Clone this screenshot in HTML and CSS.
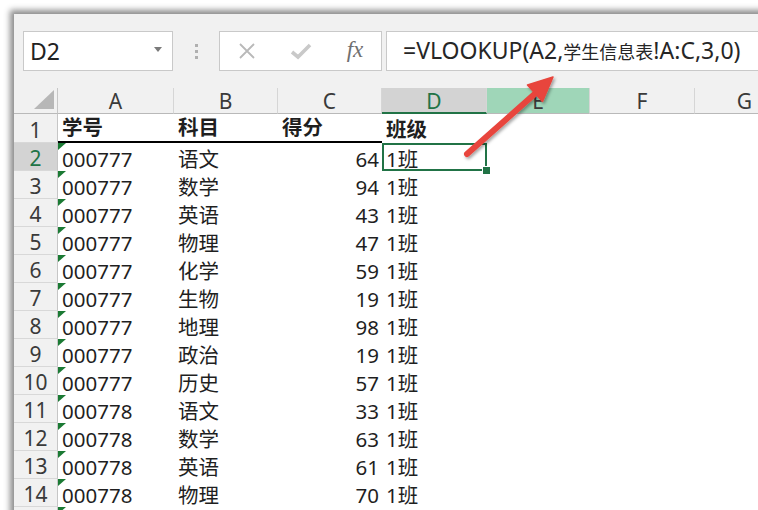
FILE: index.html
```html
<!DOCTYPE html>
<html lang="zh-CN">
<head>
<meta charset="UTF-8" />
<title>VLOOKUP 示例</title>
<link rel="stylesheet" href="styles.css">
</head>
<body>
<div class="win">
  <div class="fbar">
    <div class="namebox"><span>D2</span><i class="caret"></i></div>
    <div class="sep"><i></i><i></i><i></i></div>
    <div class="btns">
      <svg width="18" height="18" viewBox="0 0 18 18"><path d="M2 2L16 16M16 2L2 16" stroke="#b9b9b9" stroke-width="1.8" fill="none"/></svg>
      <svg width="22" height="18" viewBox="0 0 22 18"><path d="M2 10L8 15L20 3" stroke="#c9c9c9" stroke-width="3.6" fill="none"/></svg>
      <span class="b-fx">fx</span>
    </div>
    <div class="formula">=VLOOKUP(A2,<span class="cjk">学生信息表</span>!A:C,3,0)</div>
  </div>

  <div class="grid">
    <div class="corner"><i></i></div>
    <div class="ch">A</div><div class="ch">B</div><div class="ch">C</div>
    <div class="ch sel">D</div><div class="ch hi">E</div><div class="ch">F</div><div class="ch">G</div>

    <div class="rh">1</div>
    <div class="c hd line">学号</div><div class="c hd line">科目</div><div class="c hd line">得分</div>
    <div class="c hd">班级</div><div class="c"></div><div class="c"></div><div class="c"></div>

    <div class="rh sel">2</div>
    <div class="c txt">000777</div><div class="c">语文</div><div class="c num">64</div>
    <div class="c active">1班</div><div class="c"></div><div class="c"></div><div class="c"></div>

    <div class="rh">3</div>
    <div class="c txt">000777</div><div class="c">数学</div><div class="c num">94</div>
    <div class="c">1班</div><div class="c"></div><div class="c"></div><div class="c"></div>

    <div class="rh">4</div>
    <div class="c txt">000777</div><div class="c">英语</div><div class="c num">43</div>
    <div class="c">1班</div><div class="c"></div><div class="c"></div><div class="c"></div>

    <div class="rh">5</div>
    <div class="c txt">000777</div><div class="c">物理</div><div class="c num">47</div>
    <div class="c">1班</div><div class="c"></div><div class="c"></div><div class="c"></div>

    <div class="rh">6</div>
    <div class="c txt">000777</div><div class="c">化学</div><div class="c num">59</div>
    <div class="c">1班</div><div class="c"></div><div class="c"></div><div class="c"></div>

    <div class="rh">7</div>
    <div class="c txt">000777</div><div class="c">生物</div><div class="c num">19</div>
    <div class="c">1班</div><div class="c"></div><div class="c"></div><div class="c"></div>

    <div class="rh">8</div>
    <div class="c txt">000777</div><div class="c">地理</div><div class="c num">98</div>
    <div class="c">1班</div><div class="c"></div><div class="c"></div><div class="c"></div>

    <div class="rh">9</div>
    <div class="c txt">000777</div><div class="c">政治</div><div class="c num">19</div>
    <div class="c">1班</div><div class="c"></div><div class="c"></div><div class="c"></div>

    <div class="rh">10</div>
    <div class="c txt">000777</div><div class="c">历史</div><div class="c num">57</div>
    <div class="c">1班</div><div class="c"></div><div class="c"></div><div class="c"></div>

    <div class="rh">11</div>
    <div class="c txt">000778</div><div class="c">语文</div><div class="c num">33</div>
    <div class="c">1班</div><div class="c"></div><div class="c"></div><div class="c"></div>

    <div class="rh">12</div>
    <div class="c txt">000778</div><div class="c">数学</div><div class="c num">63</div>
    <div class="c">1班</div><div class="c"></div><div class="c"></div><div class="c"></div>

    <div class="rh">13</div>
    <div class="c txt">000778</div><div class="c">英语</div><div class="c num">61</div>
    <div class="c">1班</div><div class="c"></div><div class="c"></div><div class="c"></div>

    <div class="rh">14</div>
    <div class="c txt">000778</div><div class="c">物理</div><div class="c num">70</div>
    <div class="c">1班</div><div class="c"></div><div class="c"></div><div class="c"></div>

    <div class="rh"></div>
    <div class="c txt"></div><div class="c"></div><div class="c"></div>
    <div class="c"></div><div class="c"></div><div class="c"></div><div class="c"></div>
  </div>
</div>

<svg class="arrow" width="758" height="510" viewBox="0 0 758 510">
  <defs>
    <filter id="sh" x="-20%" y="-20%" width="140%" height="140%">
      <feDropShadow dx="1.5" dy="2" stdDeviation="1.5" flood-color="#000" flood-opacity="0.35"/>
    </filter>
  </defs>
  <g filter="url(#sh)" fill="#e8453c" stroke="#e8453c">
    <line x1="467" y1="154" x2="538" y2="91" stroke-width="6" stroke-linecap="round"/>
    <polygon points="553,77 527.5,85 542.5,101.5" stroke-width="1.5" stroke-linejoin="round"/>
  </g>
</svg>
</body>
</html>
```

FILE: styles.css
```css
* { box-sizing: border-box; margin: 0; padding: 0; }
body { background: #fff; overflow: hidden; font-family: "Noto Sans", "Noto Sans CJK SC", sans-serif; color: #1f1f1f; }
.win { margin: 14px 0 0 14px; width: 780px; height: 520px; background: #f1f1f1; box-shadow: -4px -4px 6px rgba(0,0,0,0.45); overflow: hidden; }

/* formula bar */
.fbar { display: flex; align-items: center; padding: 17px 0 0 9px; height: 57px; }
.namebox { width: 150px; height: 40px; background: #fff; border: 1px solid #c9c9c9; display: flex; align-items: center; justify-content: space-between; padding: 0 10px 0 6px; font-size: 23px; color: #222; }
.caret { width: 0; height: 0; border-left: 4px solid transparent; border-right: 4px solid transparent; border-top: 5px solid #7a7a7a; margin-top: -3px; }
.sep { width: 46px; display: flex; flex-direction: column; align-items: center; gap: 3px; }
.sep i { width: 3px; height: 3px; background: #b0b0b0; }
.btns { width: 163px; height: 40px; background: #fff; border: 1px solid #c9c9c9; display: grid; grid-template-columns: 54px 53px 56px; align-items: center; justify-items: center; }
.b-fx { color: #6f6f6f; font-size: 23px; font-style: italic; font-family: "Liberation Serif", serif; margin-top: -2px; }
.formula { flex: 1; margin-left: 4px; height: 40px; background: #fff; border: 1px solid #c9c9c9; padding-left: 16px; font-size: 23px; line-height: 37px; color: #262626; white-space: nowrap; }
.formula .cjk { font-size: 18px; font-family: "Noto Sans CJK SC", sans-serif; }

/* sheet */
.grid { margin-top: 17px; display: grid; grid-template-columns: 44px 116px 104px 104px 105px 103px 105px 100px; grid-template-rows: 26px 29px; grid-auto-rows: 28px; background: #fff; }
.corner { background: #f1f1f1; border-right: 1px solid #c6c6c6; border-bottom: 1px solid #b9b9b9; display: flex; align-items: flex-end; justify-content: flex-end; padding: 0 3px 4px 0; }
.corner i { width: 0; height: 0; border-left: 20px solid transparent; border-bottom: 19px solid #b7b7b7; }
.ch { background: #f1f1f1; border-right: 1px solid #d6d6d6; border-bottom: 1px solid #b9b9b9; text-align: center; font-size: 21px; line-height: 26px; color: #3a3a3a; }
.ch.sel { background: #d3d3d3; border-bottom: 2px solid #217346; color: #217346; }
.ch.hi { background: #9fd6b8; }
.rh { background: #f1f1f1; border-right: 1px solid #c6c6c6; border-bottom: 1px solid #d8d8d8; display: flex; align-items: flex-end; justify-content: center; font-size: 21px; line-height: 22px; padding-bottom: 1px; color: #3a3a3a; }
.rh.sel { background: #d3d3d3; color: #217346; }

.c { position: relative; display: flex; align-items: flex-end; padding: 0 3px 1px 4px; font-size: 20.5px; line-height: 22px; white-space: nowrap; }
.c.hd { font-weight: 700; padding-bottom: 3px; }
.c.line { border-bottom: 2px solid #000; }
.c.num { justify-content: flex-end; }
.c.txt::before { content: ""; position: absolute; left: 0; top: 0; border-top: 7px solid #1b7a34; border-right: 8px solid transparent; }
.c.active { box-shadow: inset 0 0 0 2px #217346; }
.c.active::after { content: ""; position: absolute; right: -4px; bottom: -4px; width: 7px; height: 7px; background: #217346; border: 1px solid #fff; }

.arrow { position: absolute; left: 0; top: 0; pointer-events: none; }
```
